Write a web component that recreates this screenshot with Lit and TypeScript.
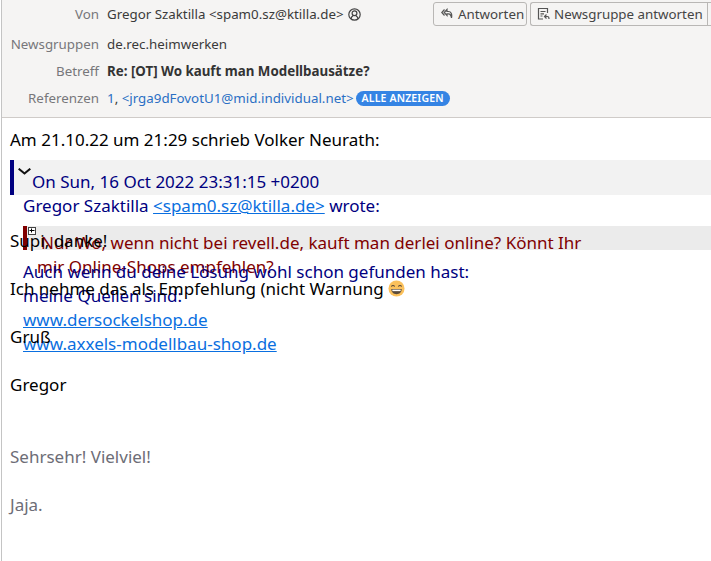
import { LitElement, html, css } from "lit";
import { customElement } from "lit/decorators.js";

@customElement("app-root")
export class AppRoot extends LitElement {
  static styles = css`
    :host { display: block; width: 711px; height: 561px; overflow: hidden; background: #fff; font-family: "Noto Sans", sans-serif; position: relative; }
    .frame { border-left: 1px solid #c4c4c4; margin-left: 1px; height: 561px; box-sizing: border-box; display: flex; flex-direction: column; }
    header { background: #f5f4f3; height: 118px; box-sizing: border-box; border-bottom: 1px solid #cfcbc8; padding-top: 5px; font-size: 13.33px; color: #3a3a3a; display: grid; grid-template-columns: 97px 1fr; column-gap: 8px; grid-template-rows: 18px 30px 27px 27px; align-content: start; align-items: end; }
    .k { color: #77777a; text-align: right; line-height: 18px; white-space: nowrap; }
    .v { line-height: 18px; white-space: nowrap; display: flex; align-items: center; min-width: 0; }
    .person { margin-left: 4px; flex: none; }
    .btn { position: absolute; top: 2px; height: 24px; box-sizing: border-box; border: 1px solid #b9b7b5; border-radius: 3px; background: #f5f4f3; display: flex; align-items: center; gap: 5px; padding-left: 7px; font-size: 13.33px; color: #454545; white-space: nowrap; }
    .b1 { left: 433px; width: 94px; }
    .b2 { left: 530px; width: 181px; border-right: none; border-radius: 3px 0 0 3px; padding-left: 6px; gap: 4px; }
    .b2::after { content: ""; position: absolute; left: 176px; top: 0; bottom: 0; border-left: 1px solid #b9b7b5; }
    .blue { color: #2a6fc4; }
    .pill { background: #3584e4; color: #fff; font-size: 10.5px; font-weight: 600; line-height: 15px; height: 15px; padding: 0 6px; border-radius: 8px; margin-left: 2px; letter-spacing: 0.15px; }
    b { font-weight: 700; color: #333; }
    main { position: relative; flex: 1; padding: 10px 8px; font-size: 17px; line-height: 24.15px; color: #000; }
    p { margin: 0; white-space: nowrap; height: 24.15px; position: relative; z-index: 3; }
    .sp { height: 24.15px; }
    .gap4 { height: 4px; }
    .sig { color: #6d6d76; }
    .pull { margin-top: -1px; }
    .layer { position: absolute; left: 0; top: 0; right: 0; }
    .qhead { position: absolute; left: 8px; right: 0; top: 42px; height: 35px; background: #f2f2f2; border-left: 4px solid #000080; box-sizing: border-box; color: #000080; padding: 9px 0 0 18px; line-height: 26px; }
    .chev { position: absolute; left: 4px; top: 8px; }
    .navy { position: absolute; left: 21px; color: #000080; white-space: nowrap; }
    a { color: #0a6fe0; text-decoration: underline; }
    .qhead2 { position: absolute; left: 21px; right: 0; top: 108px; height: 24px; background: #ebebeb; border-left: 4px solid #800000; box-sizing: border-box; }
    .red { position: absolute; left: 35px; color: #800000; white-space: nowrap; }
    .red.first { left: 39px; }
    .plus { position: absolute; left: 26px; top: 109px; width: 8px; height: 8px; z-index: 2; }
    .em { display: inline-block; width: 17px; height: 17px; vertical-align: -2px; }
  `;
  render() {
    return html`<div class="frame">
      <header>
        <div class="k">Von</div>
        <div class="v">Gregor Szaktilla &lt;spam0.sz@ktilla.de&gt;
          <svg class="person" width="13" height="13" viewBox="0 0 13 13" fill="none" stroke="#444" stroke-width="1.2"><circle cx="6.500" cy="6.500" r="5.700"/><circle cx="6.500" cy="5.200" r="2.400"/><path d="M3 10.800c.3-2 1.300-2.800 2.200-3.200M10 10.800c-.3-2-1.300-2.800-2.200-3.200"/></svg></div>
        <div class="k">Newsgruppen</div><div class="v">de.rec.heimwerken</div>
        <div class="k">Betreff</div><div class="v"><b>Re: [OT] Wo kauft man Modellbausätze?</b></div>
        <div class="k">Referenzen</div><div class="v"><span class="blue">1</span>,&nbsp;<span class="blue">&lt;jrga9dFovotU1@mid.individual.net&gt;</span><span class="pill">ALLE ANZEIGEN</span></div>
      </header>
      <div class="btn b1"><svg width="12" height="12" viewBox="0 0 12 12" fill="none" stroke="#555" stroke-width="1.200"><path d="M3.500 1.500 .8 4.500l2.700 3"/><path d="M6 1.500 3.200 4.500 6 7.500V5.800h1.500c1.500 0 2.500 1.200 3 4 .8-3.500-.5-6.300-3-6.300H6z"/></svg>Antworten</div>
      <div class="btn b2"><svg width="13" height="14" viewBox="0 0 13 14" fill="none" stroke="#555" stroke-width="1.200"><path d="M10.500 6V1.500H1.500v10.500H6M3.500 4.500h5M3.500 6.800h3.500M3.500 9h2"/><path d="M9.500 7.500 7.500 9.500l2 2M7.500 9.500h3c1 0 1.500 .8 1.500 2.500"/></svg>Newsgruppe antworten</div>
      <main>
        <p>Am 21.10.22 um 21:29 schrieb Volker Neurath:</p>
        <div class="sp"></div><div class="sp"></div><div class="sp"></div><div class="gap4"></div>
        <p>Supi, danke!</p>
        <div class="sp"></div>
        <p>Ich nehme das als Empfehlung (nicht Warnung <svg class="em" viewBox="0 0 18 18"><circle cx="9" cy="9" r="8.500" fill="#fbc15c"/><path d="M3.500 9.500h11c0 3.500-2.400 5.500-5.500 5.500S3.500 13 3.500 9.500z" fill="#5a4a3a"/><path d="M4.600 10.200h8.800v1.600H4.600z" fill="#fff"/><path d="M3.600 7c.6-1.500 2.800-1.500 3.400 0M11 7c.6-1.500 2.800-1.500 3.400 0" fill="none" stroke="#5a4a3a" stroke-width="1.100"/></svg></p>
        <div class="sp"></div>
        <p>Gruß</p>
        <div class="sp"></div>
        <p>Gregor</p>
        <div class="sp"></div><div class="sp"></div>
        <p class="sig pull">Sehrsehr! Vielviel!</p>
        <div class="sp"></div>
        <p class="sig">Jaja.</p>
        <div class="layer">
          <div class="qhead"><svg class="chev" width="13" height="7" viewBox="0 0 13 7" fill="none" stroke="#111" stroke-width="2"><path d="M.7 .7 6.500 5.500 12.300 .7"/></svg>On Sun, 16 Oct 2022 23:31:15 +0200</div>
          <div class="navy" style="top:76px">Gregor Szaktilla <a href="#">&lt;spam0.sz@ktilla.de&gt;</a> wrote:</div>
          <div class="qhead2"></div>
          <svg class="plus" viewBox="0 0 8 8"><rect x=".5" y=".5" width="7" height="7" fill="#fff" stroke="#444"/><path d="M1.500 3.500h5M3.500 1.500v4" stroke="#000"/><path d="M1.500 4h5" stroke="none"/></svg>
          <div class="red first" style="top:113px">Nur Wo, wenn nicht bei revell.de, kauft man derlei online? Könnt Ihr</div>
          <div class="red" style="top:137px">mir Online-Shops empfehlen?</div>
          <div class="navy" style="top:142px">Auch wenn du deine Lösung wohl schon gefunden hast:</div>
          <div class="navy" style="top:166px">meine Quellen sind:</div>
          <div class="navy" style="top:190px"><a href="#">www.dersockelshop.de</a></div>
          <div class="navy" style="top:214px"><a href="#">www.axxels-modellbau-shop.de</a></div>
        </div>
      </main>
    </div>`;
  }
}
